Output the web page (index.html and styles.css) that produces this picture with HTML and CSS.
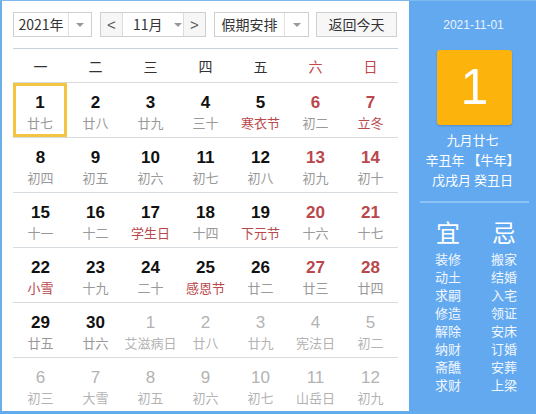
FILE: index.html
```html
<!DOCTYPE html>
<html lang="zh">
<head>
<meta charset="utf-8">
<title>万年历</title>
<link rel="stylesheet" href="styles.css">
</head>
<body>
<div class="widget">
  <div class="cal">
    <div class="toolbar">
      <div class="ctl year"><span class="val">2021年</span><span class="drop"><i class="tri"></i></span></div>
      <div class="ctl month"><span class="nav">&lt;</span><span class="mval">11月<i class="tri"></i></span><span class="nav">&gt;</span></div>
      <div class="ctl hol"><span class="val">假期安排</span><span class="drop"><i class="tri"></i></span></div>
      <div class="ctl today">返回今天</div>
    </div>
    <div class="week">
      <span>一</span><span>二</span><span>三</span><span>四</span><span>五</span><span class="we">六</span><span class="we">日</span>
    </div>
    <div class="grid">
      <div class="row">
        <div class="day sel"><b>1</b><small>廿七</small></div>
        <div class="day"><b>2</b><small>廿八</small></div>
        <div class="day"><b>3</b><small>廿九</small></div>
        <div class="day"><b>4</b><small>三十</small></div>
        <div class="day"><b>5</b><small class="fest">寒衣节</small></div>
        <div class="day we"><b>6</b><small>初二</small></div>
        <div class="day we"><b>7</b><small class="fest">立冬</small></div>
      </div>
      <div class="row">
        <div class="day"><b>8</b><small>初四</small></div>
        <div class="day"><b>9</b><small>初五</small></div>
        <div class="day"><b>10</b><small>初六</small></div>
        <div class="day"><b>11</b><small>初七</small></div>
        <div class="day"><b>12</b><small>初八</small></div>
        <div class="day we"><b>13</b><small>初九</small></div>
        <div class="day we"><b>14</b><small>初十</small></div>
      </div>
      <div class="row">
        <div class="day"><b>15</b><small>十一</small></div>
        <div class="day"><b>16</b><small>十二</small></div>
        <div class="day"><b>17</b><small class="fest">学生日</small></div>
        <div class="day"><b>18</b><small>十四</small></div>
        <div class="day"><b>19</b><small class="fest">下元节</small></div>
        <div class="day we"><b>20</b><small>十六</small></div>
        <div class="day we"><b>21</b><small>十七</small></div>
      </div>
      <div class="row">
        <div class="day"><b>22</b><small class="fest">小雪</small></div>
        <div class="day"><b>23</b><small>十九</small></div>
        <div class="day"><b>24</b><small>二十</small></div>
        <div class="day"><b>25</b><small class="fest">感恩节</small></div>
        <div class="day"><b>26</b><small>廿二</small></div>
        <div class="day we"><b>27</b><small>廿三</small></div>
        <div class="day we"><b>28</b><small>廿四</small></div>
      </div>
      <div class="row">
        <div class="day"><b>29</b><small>廿五</small></div>
        <div class="day"><b>30</b><small>廿六</small></div>
        <div class="day other"><b>1</b><small>艾滋病日</small></div>
        <div class="day other"><b>2</b><small>廿八</small></div>
        <div class="day other"><b>3</b><small>廿九</small></div>
        <div class="day other"><b>4</b><small>宪法日</small></div>
        <div class="day other"><b>5</b><small>初二</small></div>
      </div>
      <div class="row">
        <div class="day other"><b>6</b><small>初三</small></div>
        <div class="day other"><b>7</b><small>大雪</small></div>
        <div class="day other"><b>8</b><small>初五</small></div>
        <div class="day other"><b>9</b><small>初六</small></div>
        <div class="day other"><b>10</b><small>初七</small></div>
        <div class="day other"><b>11</b><small>山岳日</small></div>
        <div class="day other"><b>12</b><small>初九</small></div>
      </div>
    </div>
  </div>
  <div class="side">
    <div class="date">2021-11-01</div>
    <div class="big">1</div>
    <div class="lunar">
      <div>九月廿七</div>
      <div>辛丑年 【牛年】</div>
      <div>戊戌月 癸丑日</div>
    </div>
    <div class="sep"></div>
    <div class="yiji">
      <div class="col">
        <div class="head">宜</div>
        <div>装修</div><div>动土</div><div>求嗣</div><div>修造</div><div>解除</div><div>纳财</div><div>斋醮</div><div>求财</div>
      </div>
      <div class="col">
        <div class="head">忌</div>
        <div>搬家</div><div>结婚</div><div>入宅</div><div>领证</div><div>安床</div><div>订婚</div><div>安葬</div><div>上梁</div>
      </div>
    </div>
  </div>
</div>
</body>
</html>
```

FILE: styles.css
```css
* { box-sizing: border-box; }
html, body { margin: 0; padding: 0; }
body {
  width: 536px;
  height: 414px;
  overflow: hidden;
  font-family: "Noto Sans CJK SC", "Liberation Sans", sans-serif;
  background: #fff;
}
.widget {
  display: flex;
  width: 536px;
  height: 414px;
  border-bottom: 3px solid #64abec;
  border-top: 1px solid #7fb8ec;
}
.cal {
  width: 409px;
  border-left: 2px solid #6caee8;
  background: #fff;
  padding: 11px 11px 0 11px;
}
.toolbar {
  display: flex;
  height: 25px;
  font-size: 14px;
  color: #333;
}
.ctl {
  display: flex;
  height: 25px;
  border: 1px solid #cfcfcf;
  background: #fff;
  margin-right: 8px;
  line-height: 23px;
}
.tri {
  display: inline-block;
  width: 0;
  height: 0;
  border-left: 4px solid transparent;
  border-right: 4px solid transparent;
  border-top: 4px solid #999;
  vertical-align: middle;
  margin-top: -2px;
}
.year { width: 79px; }
.year .val { width: 54px; text-align: center; }
.drop {
  flex: 1;
  text-align: center;
  border-left: 1px solid #e2e2e2;
}
.month { width: 106px; }
.nav {
  width: 22px;
  text-align: center;
  background: #f6f6f6;
  color: #555;
  font-family: "Liberation Sans", sans-serif;
  font-size: 15px;
}
.nav:first-child { border-right: 1px solid #dcdcdc; }
.nav:last-child { border-left: 1px solid #dcdcdc; }
.mval {
  flex: 1;
  padding-left: 10px;
}
.mval .tri { margin-left: 11px; }
.hol { width: 95px; margin-right: 7px; }
.hol .val { width: 69px; text-align: center; }
.today {
  width: 81px;
  justify-content: center;
  background: #f7f7f7;
  margin-right: 0;
}
.week {
  display: grid;
  grid-template-columns: repeat(7, 55px);
  margin-top: 11px;
  border-top: 1px solid #c9d2d8;
  height: 34px;
  padding-top: 7px;
  font-size: 14px;
  color: #333;
  text-align: center;
  line-height: 20px;
}
.week .we { color: #c0474c; }
.row {
  display: grid;
  grid-template-columns: repeat(7, 55px);
  height: 55px;
  border-top: 1px solid #d6dcdf;
}
.day {
  display: flex;
  flex-direction: column;
  align-items: center;
  padding-top: 10px;
}
.day b {
  font-family: "Liberation Sans", sans-serif;
  font-weight: bold;
  font-size: 17px;
  line-height: 20px;
  color: #111;
}
.day small {
  font-size: 13px;
  line-height: 19px;
  color: #999;
}
.day small.fest { color: #b8484b; }
.day.we b { color: #b9474b; }
.day.other b { color: #b3b3b3; font-weight: normal; }
.day.other small { color: #b3b3b3; }
.day.sel {
  border: 3px solid #f3c542;
  padding-top: 7px;
  width: 54px;
  height: 54px;
}
.side {
  flex: 1;
  background: #62a9f0;
  color: #fff;
  display: flex;
  flex-direction: column;
  align-items: center;
  padding-top: 16px;
}
.date {
  font-family: "Liberation Sans", sans-serif;
  font-size: 12px;
  line-height: 16px;
  color: #eaf3ff;
  margin-left: 2px;
}
.big {
  margin-top: 17px;
  width: 75px;
  height: 75px;
  background: #fcb40d;
  border-radius: 3px;
  box-shadow: 0 1px 2px rgba(60, 80, 120, 0.35);
  font-family: "Liberation Sans", sans-serif;
  font-size: 50px;
  line-height: 75px;
  text-align: center;
  color: #fff;
  margin-left: 4px;
}
.lunar {
  margin-top: 5px;
  font-size: 13px;
  line-height: 20px;
  text-align: center;
}
.sep {
  margin-top: 11px;
  width: 109px;
  height: 2px;
  background: #8ec3f5;
  margin-left: 3px;
}
.yiji {
  display: grid;
  grid-template-columns: 56px 56px;
  align-self: flex-start;
  margin-left: 11px;
  margin-top: 11px;
  text-align: center;
  font-size: 13px;
  line-height: 18px;
  color: #f2f7ff;
}
.yiji .head {
  font-size: 24px;
  line-height: 36px;
  color: #fff;
}
```
